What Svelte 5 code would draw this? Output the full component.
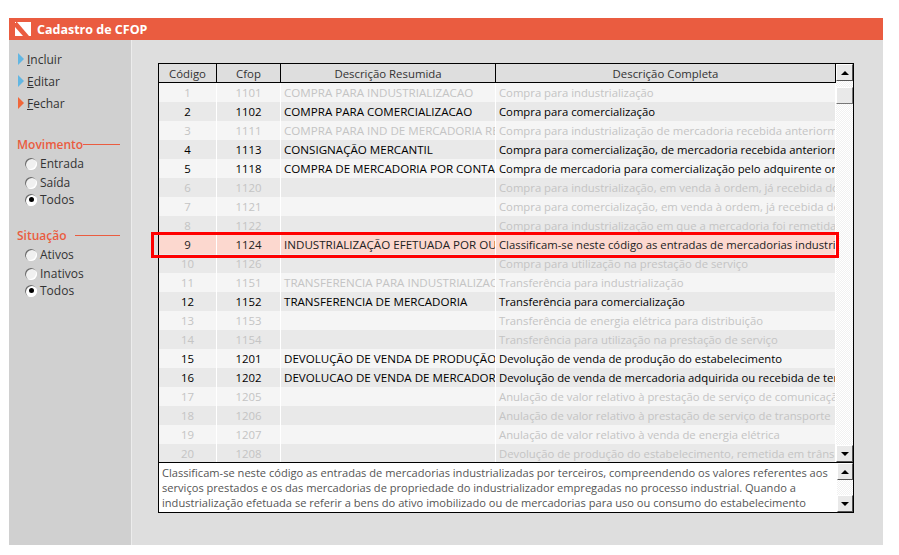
<script>
	// a = ativo (texto preto), os demais ficam esmaecidos
	const rows = [
		{ cod: 1, cfop: 1101, res: 'COMPRA PARA INDUSTRIALIZACAO', desc: 'Compra para industrialização' },
		{ cod: 2, cfop: 1102, res: 'COMPRA PARA COMERCIALIZACAO', desc: 'Compra para comercialização', a: true },
		{ cod: 3, cfop: 1111, res: 'COMPRA PARA IND DE MERCADORIA RECEBIDA', desc: 'Compra para industrialização de mercadoria recebida anteriormente' },
		{ cod: 4, cfop: 1113, res: 'CONSIGNAÇÃO MERCANTIL', desc: 'Compra para comercialização, de mercadoria recebida anteriormente', a: true },
		{ cod: 5, cfop: 1118, res: 'COMPRA DE MERCADORIA POR CONTA E ORDEM', desc: 'Compra de mercadoria para comercialização pelo adquirente originário', a: true },
		{ cod: 6, cfop: 1120, res: '', desc: 'Compra para industrialização, em venda à ordem, já recebida do vendedor' },
		{ cod: 7, cfop: 1121, res: '', desc: 'Compra para comercialização, em venda à ordem, já recebida do vendedor' },
		{ cod: 8, cfop: 1122, res: '', desc: 'Compra para industrialização em que a mercadoria foi remetida' },
		{ cod: 9, cfop: 1124, res: 'INDUSTRIALIZAÇÃO EFETUADA POR OUTRA EMPRESA', desc: 'Classificam-se neste código as entradas de mercadorias industrializadas', a: true, sel: true },
		{ cod: 10, cfop: 1126, res: '', desc: 'Compra para utilização na prestação de serviço' },
		{ cod: 11, cfop: 1151, res: 'TRANSFERENCIA PARA INDUSTRIALIZACAO', desc: 'Transferência para industrialização' },
		{ cod: 12, cfop: 1152, res: 'TRANSFERENCIA DE MERCADORIA', desc: 'Transferência para comercialização', a: true },
		{ cod: 13, cfop: 1153, res: '', desc: 'Transferência de energia elétrica para distribuição' },
		{ cod: 14, cfop: 1154, res: '', desc: 'Transferência para utilização na prestação de serviço' },
		{ cod: 15, cfop: 1201, res: 'DEVOLUÇÃO DE VENDA DE PRODUÇÃO', desc: 'Devolução de venda de produção do estabelecimento', a: true },
		{ cod: 16, cfop: 1202, res: 'DEVOLUCAO DE VENDA DE MERCADORIA', desc: 'Devolução de venda de mercadoria adquirida ou recebida de terceiros', a: true },
		{ cod: 17, cfop: 1205, res: '', desc: 'Anulação de valor relativo à prestação de serviço de comunicação' },
		{ cod: 18, cfop: 1206, res: '', desc: 'Anulação de valor relativo à prestação de serviço de transporte' },
		{ cod: 19, cfop: 1207, res: '', desc: 'Anulação de valor relativo à venda de energia elétrica' },
		{ cod: 20, cfop: 1208, res: '', desc: 'Devolução de produção do estabelecimento, remetida em trânsito' }
	];

	const acoes = [
		{ letra: 'I', resto: 'ncluir', cor: 'azul' },
		{ letra: 'E', resto: 'ditar', cor: 'azul' },
		{ letra: 'F', resto: 'echar', cor: 'laranja' }
	];
	const filtros = [
		{ titulo: 'Movimento', opcoes: ['Entrada', 'Saída', 'Todos'] },
		{ titulo: 'Situação', opcoes: ['Ativos', 'Inativos', 'Todos'] }
	];
</script>

<div class="janela">
	<header class="titulo">
		<svg width="16" height="14" viewBox="0 0 16 14">
			<path d="M2 0 L16 0 L16 14 L14 14 Z" fill="#fff" />
			<path d="M0 5 L8 14 L0 14 Z" fill="#fff" />
			<path d="M0 0 L1 0 L1 1 L0 1 Z" fill="#fff" />
		</svg>
		<span>Cadastro de CFOP</span>
	</header>

	<div class="corpo">
		<aside class="lateral">
			<nav class="acoes">
				{#each acoes as acao}
					<div class="acao">
						<i class="seta {acao.cor}"></i>
						<span><u>{acao.letra}</u>{acao.resto}</span>
					</div>
				{/each}
			</nav>

			{#each filtros as filtro}
				<fieldset class="filtro">
					<div class="legenda">
						<span>{filtro.titulo}</span>
						<i class:solto={filtro.titulo === 'Situação'}></i>
					</div>
					{#each filtro.opcoes as opcao}
						<div class="opcao">
							<i class="radio" class:marcado={opcao === 'Todos'}></i>
							<span>{opcao}</span>
						</div>
					{/each}
				</fieldset>
			{/each}
		</aside>

		<main class="conteudo">
			<div class="painel">
				<div class="grade">
					<div class="linhas">
						<div class="linha cabecalho">
							<div>Código</div>
							<div>Cfop</div>
							<div>Descrição Resumida</div>
							<div>Descrição Completa</div>
						</div>
						{#each rows as r}
							<div class="linha" class:ativo={r.a} class:sel={r.sel}>
								<div class="centro">{r.cod}</div>
								<div class="centro">{r.cfop}</div>
								<div class="texto resumo">{r.res}</div>
								<div class="texto completa">{r.desc}</div>
							</div>
						{/each}
					</div>
					<div class="barra">
						<button class="btn"><i class="up"></i></button>
						<div class="trilho"><div class="cursor"></div></div>
						<button class="btn"><i class="down"></i></button>
					</div>
					<div class="destaque"></div>
				</div>

				<div class="memo">
					<p>Classificam-se neste código as entradas de mercadorias industrializadas por terceiros, compreendendo os valores referentes aos serviços prestados e os das mercadorias de propriedade do industrializador empregadas no processo industrial. Quando a industrialização efetuada se referir a bens do ativo imobilizado ou de mercadorias para uso ou consumo do estabelecimento</p>
					<div class="barra estreita">
						<button class="btn"><i class="up"></i></button>
						<div class="trilho"></div>
						<button class="btn"><i class="down"></i></button>
					</div>
				</div>
			</div>
		</main>
	</div>
</div>

<style>
	:global(body) {
		margin: 0;
		background: #fff;
	}

	.janela {
		width: 874px;
		margin: 18px 0 0 9px;
		font-family: "Open Sans", "Noto Sans", sans-serif;
		font-size: 11.4px;
	}

	.titulo {
		height: 22px;
		background: #ea5c40;
		display: flex;
		align-items: center;
		gap: 6px;
		padding-left: 6px;
		color: #fff;
		font-weight: 700;
		font-size: 12.5px;
	}

	.corpo {
		display: flex;
		height: 505px;
		background: #dedede;
	}

	.lateral {
		width: 122px;
		background: #d0d0d0;
		border-right: 1px solid #ececec;
		color: #333;
		font-size: 12px;
	}

	.acoes {
		padding: 8px 0 0 9px;
	}

	.acao {
		height: 22px;
		display: flex;
		align-items: center;
		gap: 3px;
	}

	.seta {
		width: 0;
		height: 0;
		border-left: 6px solid;
		border-top: 6px solid transparent;
		border-bottom: 6px solid transparent;
	}

	.azul { border-left-color: #62b6e2; }
	.laranja { border-left-color: #f0673a; }

	.filtro {
		border: 0;
		margin: 21px 0 0;
		padding: 0 0 0 8px;
	}

	.filtro + .filtro {
		margin-top: 19px;
	}

	.legenda {
		display: flex;
		align-items: center;
		height: 18px;
		color: #ea5c40;
		font-weight: 600;
		font-size: 12px;
		margin-bottom: 1px;
	}

	.legenda i {
		flex: 1;
		height: 1px;
		background: #ea5c40;
		margin-right: 11px;
	}

	.legenda i.solto {
		margin-left: 8px;
	}

	.opcao {
		height: 19px;
		display: flex;
		align-items: center;
		gap: 3px;
		padding-left: 8px;
	}

	.opcao:last-child {
		height: 15px;
	}

	.radio {
		width: 12px;
		height: 12px;
		border-radius: 50%;
		background: #f0f0f0;
		box-shadow: inset 1px 1px 0 #6a6a6a, inset -1px -1px 0 #fff;
		display: flex;
		align-items: center;
		justify-content: center;
	}

	.radio.marcado {
		background: #fff;
	}

	.radio.marcado::after {
		content: '';
		width: 5px;
		height: 5px;
		border-radius: 50%;
		background: #000;
	}

	.conteudo {
		flex: 1;
		padding: 23px 0 0 26px;
	}

	.painel {
		width: 696px;
	}

	.grade {
		position: relative;
		display: flex;
		border: 1px solid #000;
		border-bottom: 0;
		height: 399px;
		background: #fff;
		box-sizing: border-box;
	}

	.linhas {
		width: 677px;
		overflow: hidden;
	}

	.linha {
		display: grid;
		grid-template-columns: 58px 64px 215px 340px;
		height: 19px;
		line-height: 19px;
		color: #c4c4c4;
	}

	.linha > div {
		overflow: hidden;
		white-space: nowrap;
		border-right: 1px solid #fff;
		background: #f5f5f5;
	}

	.linha:nth-child(odd) > div {
		background: #e9e9e9;
	}

	.linha.ativo {
		color: #000;
	}

	.linha.sel > div {
		background: #fcd8cf;
		color: #222;
	}

	.cabecalho {
		color: #333;
		text-align: center;
		box-sizing: border-box;
		border-bottom: 1px solid #000;
	}

	.cabecalho > div,
	.linha.cabecalho:nth-child(odd) > div {
		background: #dedede;
		border-right: 1px solid #000;
	}

	.centro {
		text-align: center;
	}

	.texto {
		padding-left: 3px;
	}

	.resumo {
		font-size: 11.6px;
	}

	.completa {
		font-size: 11.3px;
	}

	.barra {
		flex: 1;
		display: flex;
		flex-direction: column;
	}

	.barra.estreita {
		padding-left: 1px;
		background: #fff;
	}

	.trilho {
		flex: 1;
		background: repeating-conic-gradient(#fff 0 25%, #f1f1f1 0 50%) 0 0 / 2px 2px;
		padding-top: 6px;
	}

	.cursor {
		height: 17px;
		background: #e9e9e9;
		border: 1px solid;
		border-color: #fff #777 #777 #fff;
		box-sizing: border-box;
	}

	.btn {
		height: 17px;
		padding: 0;
		background: #e9e9e9;
		border: 1px solid;
		border-color: #fff #555 #555 #fff;
		display: flex;
		align-items: center;
		justify-content: center;
	}

	.up, .down {
		width: 0;
		height: 0;
		border-left: 4px solid transparent;
		border-right: 4px solid transparent;
	}

	.up { border-bottom: 4px solid #000; }
	.down { border-top: 4px solid #000; }

	.destaque {
		position: absolute;
		left: -8px;
		top: 168px;
		width: 682px;
		height: 20px;
		border: 3px solid #f00;
		pointer-events: none;
	}

	.memo {
		display: flex;
		border: 1px solid #000;
		height: 51px;
		box-sizing: border-box;
		background: #fff;
		color: #555;
		font-size: 11.1px;
		line-height: 15px;
	}

	.memo p {
		margin: 0;
		width: 677px;
		padding: 2px 0 0 3px;
		box-sizing: border-box;
		overflow: hidden;
	}
</style>
